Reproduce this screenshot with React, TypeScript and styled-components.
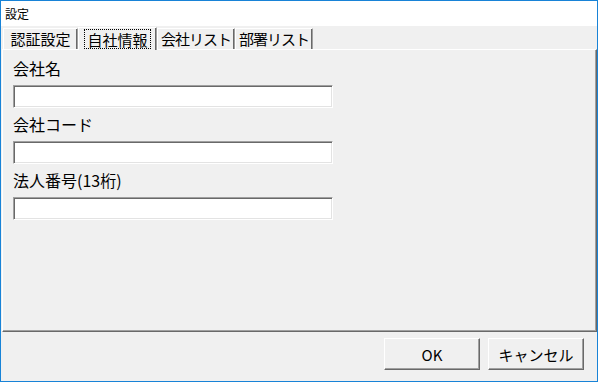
import React from "react";
import styled, { createGlobalStyle } from "styled-components";

const GlobalStyle = createGlobalStyle`
  html, body {
    margin: 0;
    padding: 0;
    background: #f0f0f0;
  }
  * {
    box-sizing: border-box;
  }
`;

const Window = styled.div`
  width: 598px;
  height: 382px;
  border: 1px solid #1883d7;
  display: flex;
  flex-direction: column;
  background: #f0f0f0;
  font-family: "Noto Sans CJK JP", "Liberation Sans", sans-serif;
  color: #000;
`;

const TitleBar = styled.div`
  height: 25px;
  background: #fff;
  display: flex;
  align-items: center;
  padding-left: 4px;
  font-size: 12px;
`;

const Body = styled.div`
  flex: 1;
  display: flex;
  flex-direction: column;
  padding-left: 1px;
`;

const TabStrip = styled.div`
  height: 23px;
  display: flex;
  align-items: flex-end;
  padding-left: 1px;
`;

const Tab = styled.div<{ $width: number; $active?: boolean; $tight?: boolean }>`
  width: ${(p) => p.$width}px;
  height: ${(p) => (p.$active ? 23 : 21)}px;
  display: flex;
  align-items: center;
  justify-content: center;
  font-size: 15px;
  line-height: 16px;
  white-space: nowrap;
  letter-spacing: ${(p) => (p.$tight ? -1 : 0)}px;
  background: #f0f0f0;
  border-top: 1px solid #fff;
  border-left: 1px solid #fff;
  border-right: 1px solid #a0a0a0;
  box-shadow: inset -1px 0 #696969;
  position: relative;
  margin-bottom: ${(p) => (p.$active ? -1 : 0)}px;
  z-index: ${(p) => (p.$active ? 1 : 0)};
`;

const FocusRect = styled.span`
  border: 1px dotted #000;
  padding: 1px 2px 0;
  height: 20px;
  display: flex;
  align-items: center;
`;

const Panel = styled.div`
  flex: 1;
  border-top: 1px solid #fff;
  border-left: 1px solid #fff;
  border-right: 1px solid #696969;
  border-bottom: 1px solid #696969;
  box-shadow: inset -1px -1px #a0a0a0;
  padding: 8px 10px 0;
  display: flex;
  flex-direction: column;
  gap: 6px;
`;

const Field = styled.div`
  display: flex;
  flex-direction: column;
  gap: 7px;
`;

const Label = styled.div`
  font-size: 16px;
  line-height: 20px;
  height: 20px;
`;

const TextBox = styled.input`
  width: 320px;
  height: 23px;
  margin: 0;
  background: #fff;
  border-top: 1px solid #a0a0a0;
  border-left: 1px solid #a0a0a0;
  border-bottom: 1px solid #fff;
  border-right: 1px solid #fff;
  box-shadow: inset 1px 1px #696969, inset -1px -1px #e3e3e3;
  outline: none;
  font-size: 15px;
`;

const Footer = styled.div`
  height: 49px;
  display: flex;
  justify-content: flex-end;
  align-items: flex-start;
  padding: 6px 13px 0 0;
  gap: 8px;
`;

const Button = styled.button`
  width: 96px;
  height: 32px;
  margin: 0;
  background: #f0f0f0;
  font-family: "Noto Sans CJK JP", "Liberation Sans", sans-serif;
  font-size: 15px;
  color: #000;
  border-top: 1px solid #fff;
  border-left: 1px solid #fff;
  border-right: 1px solid #696969;
  border-bottom: 1px solid #696969;
  box-shadow: inset -1px -1px #a0a0a0;
  padding: 0;
`;

const tabs = [
  { label: "認証設定", width: 75 },
  { label: "自社情報", width: 79, active: true },
  { label: "会社リスト", width: 78, tight: true },
  { label: "部署リスト", width: 78, tight: true },
];

const fields = ["会社名", "会社コード", "法人番号(13桁)"];

export default function App() {
  return (
    <>
      <GlobalStyle />
      <Window>
        <TitleBar>設定</TitleBar>
        <Body>
          <TabStrip>
            {tabs.map((t) => (
              <Tab key={t.label} $width={t.width} $active={t.active} $tight={t.tight}>
                {t.active ? <FocusRect>{t.label}</FocusRect> : t.label}
              </Tab>
            ))}
          </TabStrip>
          <Panel>
            {fields.map((f) => (
              <Field key={f}>
                <Label>{f}</Label>
                <TextBox />
              </Field>
            ))}
          </Panel>
          <Footer>
            <Button>OK</Button>
            <Button>キャンセル</Button>
          </Footer>
        </Body>
      </Window>
    </>
  );
}
